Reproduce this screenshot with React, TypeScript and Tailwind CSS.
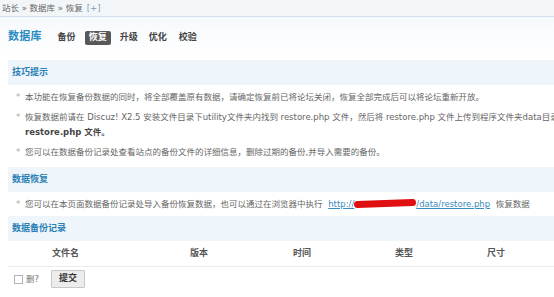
import React from "react";

const font = "font-['DejaVu_Sans','Noto_Sans_CJK_SC',sans-serif]";

function SectionHeader({ children }: { children: React.ReactNode }) {
  return (
    <div className="ml-[8px] h-[25px] flex items-center pl-[4px] bg-[#eef5fb] text-[#2a80b5] font-bold text-[9px]">
      {children}
    </div>
  );
}

function Bullet({ children }: { children: React.ReactNode }) {
  return (
    <li className="flex leading-[15px] whitespace-nowrap">
      <span className="w-[25px] shrink-0 pl-[16px] text-[#aaa]">*</span>
      <div>{children}</div>
    </li>
  );
}

export default function App() {
  return (
    <div className={`${font} w-[554px] h-[297px] overflow-hidden bg-white text-[8.5px] text-[#666]`}>
      {/* breadcrumb */}
      <div className="h-[17px] flex items-center pl-[2px] bg-[#f3f6f9] border-b border-[#d3e0ec] text-[#666]">
        站长 » 数据库 » 恢复 <span className="ml-[4px] text-[#7a9ab8]">[+]</span>
      </div>
      {/* nav */}
      <div className="flex items-center h-[41px] pl-[8px] bg-gradient-to-b from-[#f6f9fc] to-white">
        <span className="text-[11px] font-bold text-[#2b8bc3] mr-[15px] tracking-[0.2px]">数据库</span>
        <div className="flex items-center gap-[8px] font-bold text-[9px] text-[#444]">
          <span className="px-[1px]">备份</span>
          <span className="px-[4px] h-[14px] flex items-center bg-[#585858] text-white rounded-[2px]">恢复</span>
          <span className="px-[1px]">升级</span>
          <span className="px-[2px]">优化</span>
          <span className="px-[2px]">校验</span>
        </div>
      </div>
      <div className="h-[2px]" />
      <SectionHeader>技巧提示</SectionHeader>
      <ul className="pt-[5px] pb-[1px] flex flex-col gap-[5px]">
        <Bullet>本功能在恢复备份数据的同时，将全部覆盖原有数据，请确定恢复前已将论坛关闭，恢复全部完成后可以将论坛重新开放。</Bullet>
        <Bullet>
          <div>恢复数据前请在 Discuz! X2.5 安装文件目录下utility文件夹内找到 restore.php 文件，然后将 restore.php 文件上传到程序文件夹data目录下。为了您站点的安全，成功恢复数据后请务必及时删除</div>
          <div className="font-bold text-[#444]">restore.php 文件。</div>
        </Bullet>
        <Bullet>您可以在数据备份记录处查看站点的备份文件的详细信息，删除过期的备份,并导入需要的备份。</Bullet>
      </ul>
      <div className="h-[6px]" />
      <SectionHeader>数据恢复</SectionHeader>
      <ul className="pt-[5px] pb-[4px]">
        <Bullet>
          您可以在本页面数据备份记录处导入备份恢复数据，也可以通过在浏览器中执行{" "}
          <span className="ml-[3px] text-[#3a8cc0] underline">
            http://
            <span className="inline-block align-middle w-[62px] h-[7px] -mt-[2px] bg-[#e01010] rounded-full -rotate-2" />
            /data/restore.php
          </span>{" "}
          <span className="ml-[3px]">恢复数据</span>
        </Bullet>
      </ul>
      <SectionHeader>数据备份记录</SectionHeader>
      <div className="ml-[8px] grid grid-cols-[44px_138px_103px_102px_92px_1fr] h-[26px] items-center border-b border-[#e6edf3] font-bold text-[9px] text-[#555]">
        <span />
        <span>文件名</span>
        <span>版本</span>
        <span>时间</span>
        <span>类型</span>
        <span>尺寸</span>
      </div>
      <div className="flex items-center h-[22px] mt-[1px] pl-[14px]">
        <span className="w-[9px] h-[9px] border border-[#aab4bf] bg-white mr-[3px]" />
        <span className="text-[#777]">删?</span>
        <button className="ml-[12px] h-[18px] px-[7px] bg-[#ececec] border border-[#c8c8c8] rounded-[1px] text-[9px] font-bold text-[#333]">
          提交
        </button>
      </div>
    </div>
  );
}
